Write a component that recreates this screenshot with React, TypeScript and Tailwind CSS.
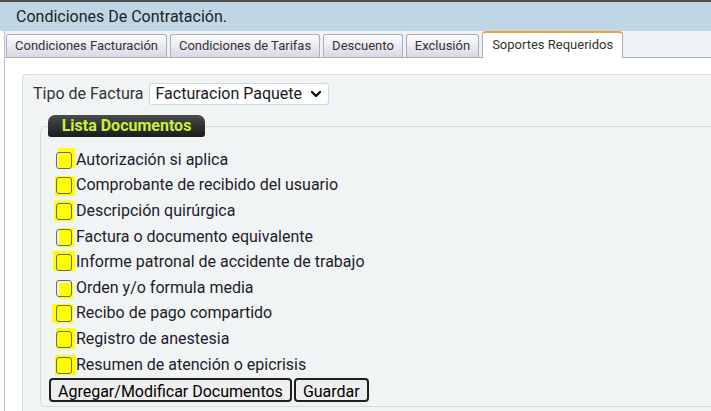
import React from "react";

const items: { label: string; hl: string }[] = [
  { label: "Autorización si aplica", hl: "left-[3px] top-[-2px] w-[17px] h-[20px]" },
  { label: "Comprobante de recibido del usuario", hl: "left-[0px] top-[1px] w-[20px] h-[20px]" },
  { label: "Descripción quirúrgica", hl: "left-[-1px] top-[0px] w-[20px] h-[20px]" },
  { label: "Factura o documento equivalente", hl: "left-[4px] top-[1px] w-[15px] h-[19px]" },
  { label: "Informe patronal de accidente de trabajo", hl: "left-[-2px] top-[-1px] w-[22px] h-[20px]" },
  { label: "Orden y/o formula media", hl: "left-[4px] top-[5px] w-[14px] h-[16px]" },
  { label: "Recibo de pago compartido", hl: "left-[-3px] top-[1px] w-[21px] h-[19px]" },
  { label: "Registro de anestesia", hl: "left-[1px] top-[-1px] w-[19px] h-[21px]" },
  { label: "Resumen de atención o epicrisis", hl: "left-[0px] top-[0px] w-[21px] h-[20px]" },
];

const tabs = [
  "Condiciones Facturación",
  "Condiciones de Tarifas",
  "Descuento",
  "Exclusión",
];

export default function App() {
  return (
    <div className="w-[711px] h-[411px] overflow-hidden bg-white font-['Roboto',_'Liberation_Sans',_sans-serif]">
      <div className="h-[31px] border-t-[2px] border-[#4f4f4f] bg-[#c1d6e4] flex items-center pl-[16px] text-[16px] text-[#222]">
        Condiciones De Contratación.
      </div>
      <div className="ml-[4px] border-l border-[#b9c3cb] h-[380px]">
        <div className="flex items-end gap-[3px] pl-[1px] h-[27px] bg-[#eef2f6] border-b border-[#a9b1b9]">
          {tabs.map((t) => (
            <div
              key={t}
              className="h-[23px] flex items-center px-[8px] text-[13px] text-[#333] border border-b-0 border-[#a8b0b8] rounded-t-[3px] bg-gradient-to-b from-[#fdfdfd] to-[#d8d8e6]"
            >
              {t}
            </div>
          ))}
          <div className="h-[27px] -mb-[1px] flex items-center px-[9px] pb-[1px] text-[13px] text-[#333] border border-b-0 border-[#a8b0b8] border-t-[2px] border-t-[#f2a23a] rounded-t-[4px] bg-white">
            Soportes Requeridos
          </div>
        </div>
        <div className="pl-[17px] pt-[16px]">
          <div className="w-[720px] h-[400px] rounded-tl-[4px] border-l border-t border-[#dadee2] bg-[#f1f4f5] pl-[10px] pt-[7px]">
            <div className="flex items-center gap-[5px]">
              <span className="text-[16px] text-[#333]">Tipo de Factura</span>
              <div className="w-[180px] h-[22px] flex items-center justify-between pl-[6px] pr-[6px] bg-white border border-[#c9d9e6] rounded-[3px] text-[16px] text-[#1a1a1a]">
                <span>Facturacion Paquete</span>
                <svg width="12" height="10" viewBox="0 0 12 10">
                  <path d="M2 3 L6 7 L10 3" fill="none" stroke="#111" strokeWidth="2.4" strokeLinecap="round" strokeLinejoin="round" />
                </svg>
              </div>
            </div>
            <div className="mt-[20px] ml-[7px] w-[700px] border border-[#d6dadf] rounded-[6px] pb-[4px]">
              <div className="-mt-[12px] ml-[7px] w-[157px] h-[22px] flex items-center justify-center rounded-t-[7px] rounded-b-[3px] bg-gradient-to-b from-[#4c4c4c] to-[#1c1c1c] text-[#c6f23a] font-bold text-[16px]">
                Lista Documentos
              </div>
              <div className="mt-[10px]">
                {items.map((it) => (
                  <div key={it.label} className="h-[25.6px] flex items-center">
                    <div className="relative ml-[14px] w-[20px] h-[20px]">
                      <span className={"absolute bg-[#ffff00] " + it.hl} />
                      <span className="absolute left-[1px] top-[2px] w-[16px] h-[17px] border border-[#6a6a6a] rounded-[3px]" />
                    </div>
                    <span className="ml-[1px] text-[16px] text-[#1c1c2c]">{it.label}</span>
                  </div>
                ))}
              </div>
              <div className="mt-[1px] ml-[8px] flex gap-[2px]">
                <button className="h-[24px] px-[7px] border-2 border-[#1f1f1f] rounded-[4px] bg-[#efefef] text-[16px] text-black">
                  Agregar/Modificar Documentos
                </button>
                <button className="h-[24px] px-[7px] border-2 border-[#1f1f1f] rounded-[4px] bg-[#efefef] text-[16px] text-black">
                  Guardar
                </button>
              </div>
            </div>
          </div>
        </div>
      </div>
    </div>
  );
}
